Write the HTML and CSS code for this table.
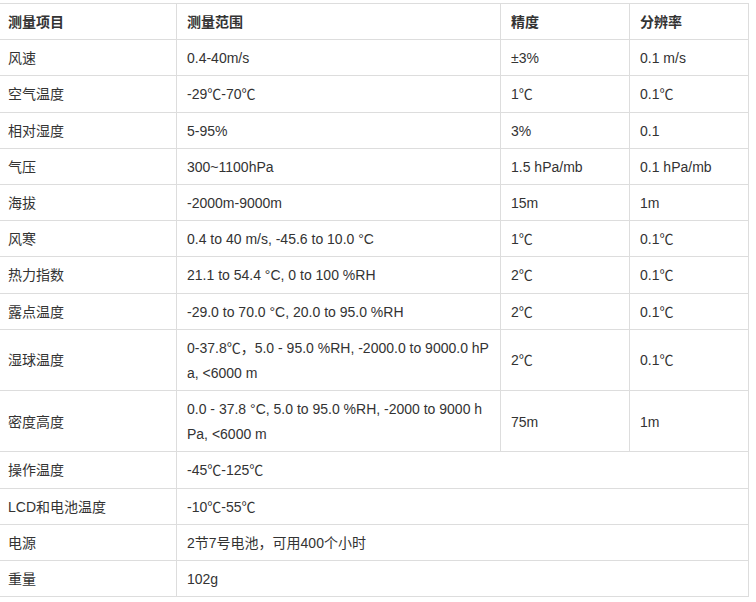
FILE: index.html
```html
<!DOCTYPE html>
<html lang="zh-CN">
<head>
<meta charset="utf-8">
<link rel="stylesheet" href="styles.css">
</head>
<body>
<table class="spec">
  <colgroup>
    <col class="c1"><col class="c2"><col class="c3"><col class="c4">
  </colgroup>
  <thead>
    <tr><th>测量项目</th><th>测量范围</th><th>精度</th><th>分辨率</th></tr>
  </thead>
  <tbody>
    <tr><td>风速</td><td>0.4-40m/s</td><td>±3%</td><td>0.1 m/s</td></tr>
    <tr><td>空气温度</td><td>-29℃-70℃</td><td>1℃</td><td>0.1℃</td></tr>
    <tr><td>相对湿度</td><td>5-95%</td><td>3%</td><td>0.1</td></tr>
    <tr><td>气压</td><td>300~1100hPa</td><td>1.5 hPa/mb</td><td>0.1 hPa/mb</td></tr>
    <tr><td>海拔</td><td>-2000m-9000m</td><td>15m</td><td>1m</td></tr>
    <tr><td>风寒</td><td>0.4 to 40 m/s, -45.6 to 10.0 °C</td><td>1℃</td><td>0.1℃</td></tr>
    <tr><td>热力指数</td><td>21.1 to 54.4 °C, 0 to 100 %RH</td><td>2℃</td><td>0.1℃</td></tr>
    <tr><td>露点温度</td><td>-29.0 to 70.0 °C, 20.0 to 95.0 %RH</td><td>2℃</td><td>0.1℃</td></tr>
    <tr><td>湿球温度</td><td>0-37.8℃，5.0 - 95.0 %RH, -2000.0 to 9000.0 hPa, &lt;6000 m</td><td>2℃</td><td>0.1℃</td></tr>
    <tr><td>密度高度</td><td>0.0 - 37.8 °C, 5.0 to 95.0 %RH, -2000 to 9000 hPa, &lt;6000 m</td><td>75m</td><td>1m</td></tr>
    <tr><td>操作温度</td><td colspan="3">-45℃-125℃</td></tr>
    <tr><td>LCD和电池温度</td><td colspan="3">-10℃-55℃</td></tr>
    <tr><td>电源</td><td colspan="3">2节7号电池，可用400个小时</td></tr>
    <tr><td>重量</td><td colspan="3">102g</td></tr>
  </tbody>
</table>
</body>
</html>
```

FILE: styles.css
```css
html, body {
  margin: 0;
  padding: 0;
  background: #fff;
}
body {
  font-family: "Liberation Sans", Arial, "Noto Sans CJK SC", sans-serif;
  font-size: 14px;
  color: #333;
}
.spec {
  border-collapse: collapse;
  table-layout: fixed;
  width: 751px;
  margin: 3px 0 0 -3px;
}
.c1 { width: 179px; }
.c2 { width: 324px; }
.c3 { width: 129px; }
.c4 { width: 119px; }
.spec th,
.spec td {
  border: 1px solid #ddd;
  padding: 6px 10px 4px;
  line-height: 1.8;
  text-align: left;
  vertical-align: middle;
  word-break: break-all;
}
.spec th {
  font-weight: bold;
}
```
